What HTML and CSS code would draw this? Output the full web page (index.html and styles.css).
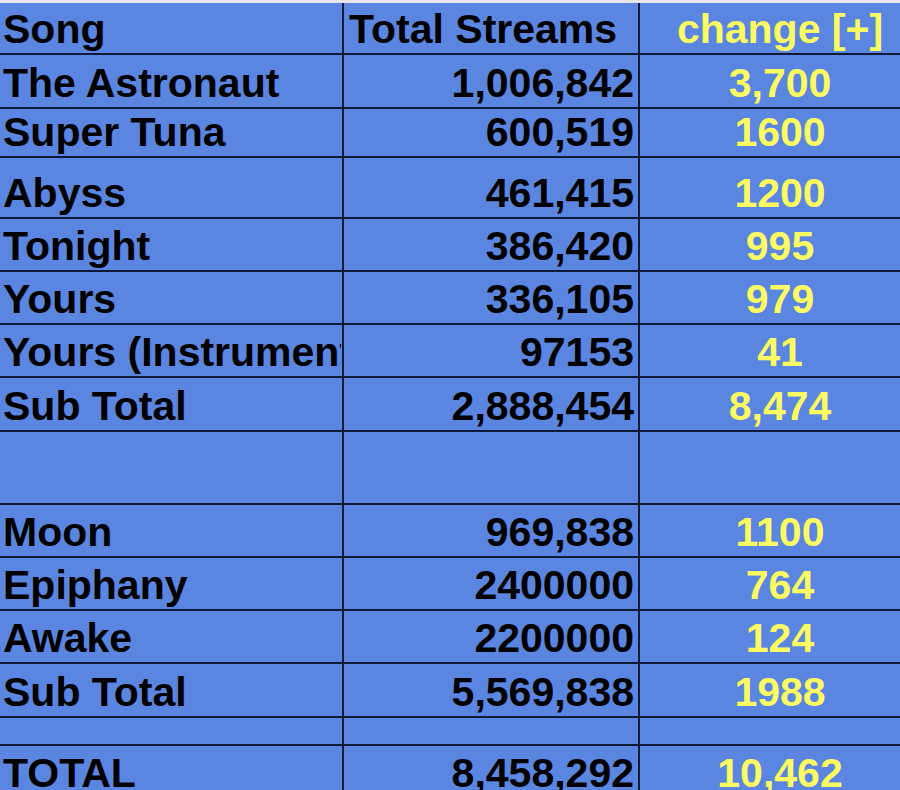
FILE: index.html
```html
<!DOCTYPE html>
<html>
<head>
    <meta charset="UTF-8">
    <meta name="viewport" content="width=device-width, initial-scale=1.0">
    <title>Song Streams</title>
    <link rel="stylesheet" href="styles.css">
</head>
<body>
    <div class="top-strip"></div>
    <table class="sheet">
        <colgroup>
            <col class="col-song">
            <col class="col-streams">
            <col class="col-change">
        </colgroup>
        <tr class="r-head">
            <td class="song">Song</td>
            <td class="streams head-left">Total Streams</td>
            <td class="change">change [+]</td>
        </tr>
        <tr class="r-wide">
            <td class="song">The Astronaut</td>
            <td class="streams">1,006,842</td>
            <td class="change">3,700</td>
        </tr>
        <tr class="r-short">
            <td class="song">Super Tuna</td>
            <td class="streams">600,519</td>
            <td class="change">1600</td>
        </tr>
        <tr class="r-tall">
            <td class="song">Abyss</td>
            <td class="streams">461,415</td>
            <td class="change">1200</td>
        </tr>
        <tr>
            <td class="song">Tonight</td>
            <td class="streams">386,420</td>
            <td class="change">995</td>
        </tr>
        <tr>
            <td class="song">Yours</td>
            <td class="streams">336,105</td>
            <td class="change">979</td>
        </tr>
        <tr>
            <td class="song"><div class="clip">Yours (Instrumental)</div></td>
            <td class="streams">97153</td>
            <td class="change">41</td>
        </tr>
        <tr class="r-wide">
            <td class="song">Sub Total</td>
            <td class="streams">2,888,454</td>
            <td class="change">8,474</td>
        </tr>
        <tr class="r-gap">
            <td class="song"></td>
            <td class="streams"></td>
            <td class="change"></td>
        </tr>
        <tr>
            <td class="song">Moon</td>
            <td class="streams">969,838</td>
            <td class="change">1100</td>
        </tr>
        <tr>
            <td class="song">Epiphany</td>
            <td class="streams">2400000</td>
            <td class="change">764</td>
        </tr>
        <tr>
            <td class="song">Awake</td>
            <td class="streams">2200000</td>
            <td class="change">124</td>
        </tr>
        <tr class="r-wide">
            <td class="song">Sub Total</td>
            <td class="streams">5,569,838</td>
            <td class="change">1988</td>
        </tr>
        <tr class="r-thin">
            <td class="song"></td>
            <td class="streams"></td>
            <td class="change"></td>
        </tr>
        <tr>
            <td class="song">TOTAL</td>
            <td class="streams">8,458,292</td>
            <td class="change">10,462</td>
        </tr>
    </table>
</body>
</html>
```

FILE: styles.css
```css
body {
    margin: 0;
    padding: 0;
    background-color: #5a85e0;
    font-family: "Liberation Sans", Arial, Helvetica, sans-serif;
    overflow: hidden;
    height: 790px;
}

.top-strip {
    height: 3px;
    background-color: #e6e8ee; /* light edge above the sheet */
}

.sheet {
    border-collapse: separate;
    border-spacing: 0;
    table-layout: fixed;
    width: 920px;
    background-color: #5a85e0;
}

.col-song { width: 344px; }
.col-streams { width: 296px; }
.col-change { width: 280px; }

.sheet tr {
    height: 53px;
}

.sheet tr.r-head { height: 52px; }
.sheet tr.r-short { height: 49px; }
.sheet tr.r-tall { height: 61px; }
.sheet tr.r-wide { height: 54px; }
.sheet tr.r-gap { height: 73px; }
.sheet tr.r-thin { height: 28px; }

.sheet td {
    box-sizing: border-box;
    padding: 0 0 1px 0;
    border-bottom: 2px solid #0e1a38;
    font-size: 41px;
    font-weight: bold;
    line-height: 46px;
    vertical-align: bottom;
    white-space: nowrap;
    overflow: hidden;
}

.song {
    border-right: 2px solid #0e1a38;
    padding-left: 3px !important;
    color: #000;
}

.streams {
    border-right: 2px solid #0e1a38;
    text-align: right;
    padding-right: 4px !important;
    color: #000;
}

.streams.head-left {
    text-align: left;
    padding-left: 5px !important;
}

.change {
    text-align: center;
    color: #fbfb62; /* yellow change column */
}

.clip {
    overflow: hidden;
    white-space: nowrap;
    width: 338px;
}
```
